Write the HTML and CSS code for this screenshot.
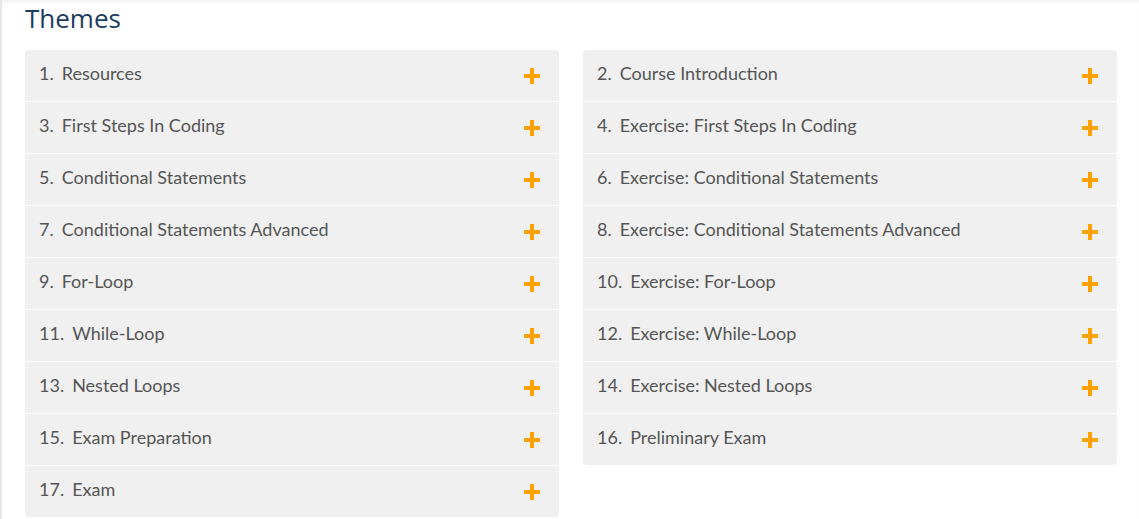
FILE: index.html
```html
<!DOCTYPE html>
<html>
<head>
<meta charset="utf-8">
<link rel="stylesheet" href="styles.css">
</head>
<body>
<div class="page">
  <h2 class="title">Themes</h2>
  <div class="columns">
    <ul class="list">
      <li class="item"><span class="num">1.</span><span class="name">Resources</span><span class="plus"></span></li>
      <li class="item"><span class="num">3.</span><span class="name">First Steps In Coding</span><span class="plus"></span></li>
      <li class="item"><span class="num">5.</span><span class="name">Conditional Statements</span><span class="plus"></span></li>
      <li class="item"><span class="num">7.</span><span class="name">Conditional Statements Advanced</span><span class="plus"></span></li>
      <li class="item"><span class="num">9.</span><span class="name">For-Loop</span><span class="plus"></span></li>
      <li class="item"><span class="num">11.</span><span class="name">While-Loop</span><span class="plus"></span></li>
      <li class="item"><span class="num">13.</span><span class="name">Nested Loops</span><span class="plus"></span></li>
      <li class="item"><span class="num">15.</span><span class="name">Exam Preparation</span><span class="plus"></span></li>
      <li class="item"><span class="num">17.</span><span class="name">Exam</span><span class="plus"></span></li>
    </ul>
    <ul class="list">
      <li class="item"><span class="num">2.</span><span class="name">Course Introduction</span><span class="plus"></span></li>
      <li class="item"><span class="num">4.</span><span class="name">Exercise: First Steps In Coding</span><span class="plus"></span></li>
      <li class="item"><span class="num">6.</span><span class="name">Exercise: Conditional Statements</span><span class="plus"></span></li>
      <li class="item"><span class="num">8.</span><span class="name">Exercise: Conditional Statements Advanced</span><span class="plus"></span></li>
      <li class="item"><span class="num">10.</span><span class="name">Exercise: For-Loop</span><span class="plus"></span></li>
      <li class="item"><span class="num">12.</span><span class="name">Exercise: While-Loop</span><span class="plus"></span></li>
      <li class="item"><span class="num">14.</span><span class="name">Exercise: Nested Loops</span><span class="plus"></span></li>
      <li class="item"><span class="num">16.</span><span class="name">Preliminary Exam</span><span class="plus"></span></li>
    </ul>
  </div>
</div>
</body>
</html>
```
FILE: styles.css
```css
html, body {
  margin: 0;
  padding: 0;
  background: #ffffff;
}
.page {
  height: 519px;
  box-sizing: border-box;
  border-left: 2px solid #e6e6e6;
  box-shadow: inset 0 4px 5px -3px rgba(0, 0, 0, 0.08);
  padding: 0 21px 0 23px;
}
.title {
  margin: 0;
  padding-top: 1px;
  height: 50px;
  box-sizing: border-box;
  font-family: "Open Sans", sans-serif;
  font-weight: 400;
  font-size: 26px;
  line-height: 34px;
  color: #1d3c5e;
}
.columns {
  display: grid;
  grid-template-columns: 534px 534px;
  column-gap: 24px;
  align-items: start;
}
.list {
  list-style: none;
  margin: 0;
  padding: 0;
  border-radius: 4px;
  overflow: hidden;
}
.item {
  display: flex;
  align-items: center;
  height: 51px;
  background: #f0f0f0;
  border-top: 1px solid #ffffff;
  padding: 0 19px 0 14px;
  font-family: Lato, sans-serif;
  font-size: 18px;
  color: #555555;
}
.item:first-child {
  border-top: none;
}
.num {
  margin-right: 8px;
  position: relative;
  top: -3px;
}
.name {
  flex: 1;
  position: relative;
  top: -3px;
}
.plus {
  width: 16px;
  height: 16px;
  background:
    linear-gradient(#ffa200, #ffa200) center / 16px 4px no-repeat,
    linear-gradient(#ffa200, #ffa200) center / 4px 16px no-repeat;
}
```
